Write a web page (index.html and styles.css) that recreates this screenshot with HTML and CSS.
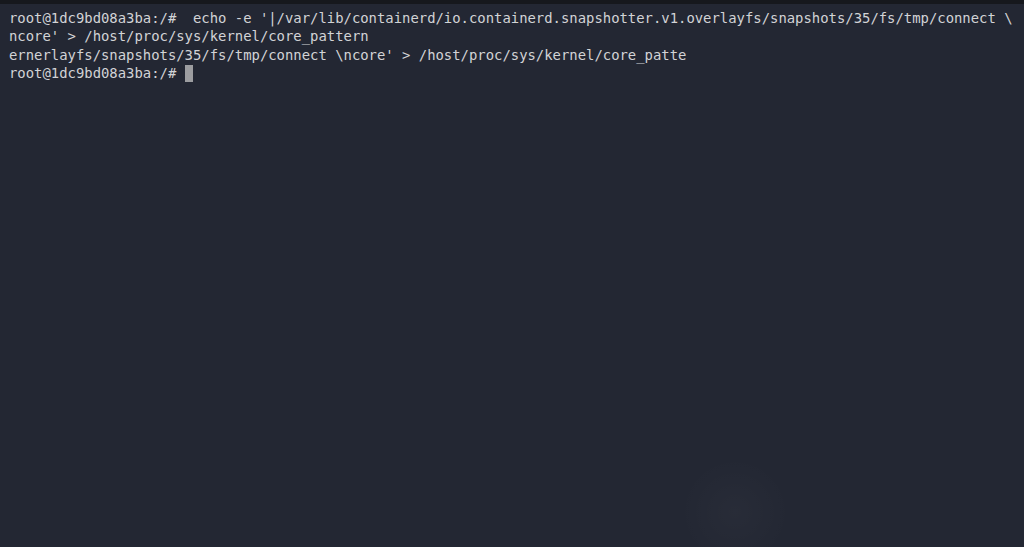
FILE: index.html
```html
<!DOCTYPE html>
<html>
<head>
<meta charset="utf-8">
<link rel="stylesheet" href="styles.css">
</head>
<body>
<div class="topbar"></div>
<main class="terminal">
<div class="line">root@1dc9bd08a3ba:/#  echo -e '|/var/lib/containerd/io.containerd.snapshotter.v1.overlayfs/snapshots/35/fs/tmp/connect \</div>
<div class="line">ncore' &gt; /host/proc/sys/kernel/core_pattern</div>
<div class="line">ernerlayfs/snapshots/35/fs/tmp/connect \ncore' &gt; /host/proc/sys/kernel/core_patte</div>
<div class="line">root@1dc9bd08a3ba:/# <span class="cursor"></span></div>
</main>
</body>
</html>
```
FILE: styles.css
```css
html, body {
  margin: 0;
  padding: 0;
  width: 1024px;
  height: 547px;
  overflow: hidden;
}
body {
  background-color: #232733;
  background-image:
    radial-gradient(circle at 735px 512px, rgba(255,255,255,0.022) 0, rgba(255,255,255,0) 55px);
}
.topbar {
  height: 4px;
  background: #16181d;
}
.terminal {
  padding: 5px 0 0 9px;
  font-family: "DejaVu Sans Mono", "Liberation Mono", monospace;
  font-size: 13.9px;
  line-height: 18.3px;
  color: #d2d3d6;
}
.line {
  white-space: pre;
  height: 18.3px;
}
.cursor {
  display: inline-block;
  width: 8.4px;
  height: 17px;
  background: #9c9da0;
  vertical-align: -4px;
}
```
